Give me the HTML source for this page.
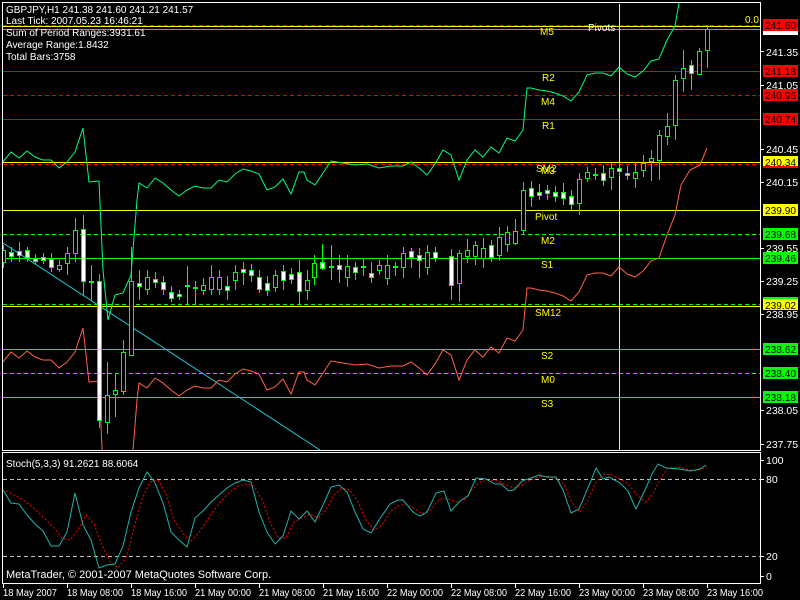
<!DOCTYPE html>
<html><head><meta charset="utf-8"><style>
html,body{margin:0;padding:0;background:#000;width:800px;height:600px;overflow:hidden}
svg{display:block;font-family:"Liberation Sans",sans-serif}
.t{fill:#fff;font-size:10px}
.y{fill:#ff0;font-size:10px}
.ax{fill:#fff;font-size:10.5px}
.tg{font-size:10.5px;fill:#000}
</style></head><body>
<svg width="800" height="600" viewBox="0 0 800 600">
<rect width="800" height="600" fill="#000"/>
<defs><clipPath id="m"><rect x="3" y="3" width="757" height="447"/></clipPath></defs>
<rect x="2.5" y="2.5" width="758" height="448" fill="none" stroke="#fff"/>
<rect x="2.5" y="452.5" width="758" height="131" fill="none" stroke="#fff"/>
<g clip-path="url(#m)">
<line x1="3" y1="25.5" x2="760" y2="25.5" stroke="#f00" stroke-dasharray="4,3"/>
<line x1="3" y1="26.5" x2="760" y2="26.5" stroke="#ff0"/>
<line x1="3" y1="29.5" x2="760" y2="29.5" stroke="#8c9099"/>
<line x1="3" y1="71.5" x2="760" y2="71.5" stroke="#e00"/>
<line x1="3" y1="95.5" x2="760" y2="95.5" stroke="#e00" stroke-dasharray="4,3"/>
<line x1="3" y1="119.5" x2="760" y2="119.5" stroke="#e00"/>
<line x1="3" y1="162.5" x2="760" y2="162.5" stroke="#ff0"/>
<line x1="3" y1="164.5" x2="760" y2="164.5" stroke="#f00" stroke-dasharray="4,3"/>
<line x1="3" y1="210.5" x2="760" y2="210.5" stroke="#ff0"/>
<line x1="3" y1="234.5" x2="760" y2="234.5" stroke="#0f0" stroke-dasharray="4,3"/>
<line x1="3" y1="258.5" x2="760" y2="258.5" stroke="#0f0"/>
<line x1="3" y1="304.5" x2="760" y2="304.5" stroke="#0f0" stroke-dasharray="4,3"/>
<line x1="3" y1="306.5" x2="760" y2="306.5" stroke="#ff0"/>
<line x1="3" y1="349.5" x2="760" y2="349.5" stroke="#0f0"/>
<line x1="3" y1="373.5" x2="760" y2="373.5" stroke="#0f0" stroke-dasharray="4,3"/>
<line x1="3" y1="397.5" x2="760" y2="397.5" stroke="#0f0"/>
<line x1="619.5" y1="4" x2="619.5" y2="450" stroke="#ff0"/>
<line x1="3" y1="243" x2="320" y2="450" stroke="#20c0d0"/>
<polyline fill="none" stroke="#00ff7f" points="2,163 11,152 19,158 27,151 35,157 43,160 51,160 59,168 67,162 75,152 83,128 89,182 99,181 103,270 108,320 115,295 123,293 131,275 137,200 139,183 147,188 155,178 163,183 171,190 179,196 187,190 195,186 203,188 211,188 219,180 227,182 235,174 243,169 251,171 259,174 267,190 275,187 283,179 291,194 299,172 304,172 307,180 315,185 331,161 343,163 355,165 367,164 379,168 391,166 403,166 411,162 419,168 427,175 435,164 443,150 451,155 459,180 467,160 475,150 483,157 491,147 499,153 507,138 515,141 523,130 527,88 531,88 539,90 547,91 555,93 563,96 571,101 579,92 587,75 595,73 603,73 611,76 619,67 627,74 635,77 643,71 651,61 659,59 667,40 675,26 679,3"/>
<polyline fill="none" stroke="#ff6347" points="2,363 11,352 19,358 27,351 35,357 43,360 51,360 59,368 67,362 75,352 83,328 89,382 99,381 103,470 123,493 131,475 137,400 139,383 147,388 155,378 163,383 171,390 179,396 187,390 195,386 203,388 211,388 219,380 227,382 235,374 243,369 251,371 259,374 267,390 275,387 283,379 291,394 299,372 304,372 307,380 315,385 331,361 343,363 355,365 367,364 379,368 391,366 403,366 411,362 419,368 427,375 435,364 443,350 451,355 459,380 467,360 475,350 483,357 491,347 499,353 507,338 515,341 523,330 527,288 531,288 539,290 547,291 555,293 563,296 571,301 579,292 587,275 595,273 603,273 611,276 619,267 627,274 635,277 643,271 651,261 659,258 667,235 675,215 681,185 690,170 700,165 707,148"/>
<g stroke="#0f0" stroke-width="1">
<path d="M3.5 245V268M11.5 247V262M19.5 242V262M27.5 247V262M35.5 254V264M43.5 253V264M51.5 253V272M59.5 260V272M67.5 247V275M75.5 218V262M83.5 215V295M91.5 265V300M99.5 274V428M107.5 362V434M115.5 373V417M123.5 340V395M131.5 247V355M139.5 270V300M147.5 270V295M155.5 272V288M163.5 276V295M171.5 286V302M179.5 290V300M187.5 266V305M195.5 281V305M203.5 278V295M211.5 265V295M219.5 270V295M227.5 276V300M235.5 265V290M243.5 262V285M251.5 264V282M259.5 270V293M267.5 276V296M275.5 270V292M283.5 265V290M291.5 268V284M299.5 260V305M307.5 270V300M314.5 255V285M322.5 244V270M331.5 245V280M339.5 255V283M347.5 255V287M355.5 262V280M363.5 258V276M371.5 262V283M379.5 260V275M387.5 255V285M395.5 262V276M403.5 247V278M411.5 248V268M419.5 248V278M427.5 245V275M435.5 247V262M451.5 249V300M459.5 250V302M467.5 239V263M475.5 241V265M483.5 238V268M491.5 240V262M499.5 227V261M507.5 226V252M515.5 219V245M523.5 182V234M531.5 181V207M539.5 184V200M547.5 185V200M555.5 186V202M563.5 183V205M571.5 190V210M579.5 173V215M587.5 167V182M595.5 168V180M603.5 165V186M611.5 163V190M619.5 163V176M627.5 166V180M635.5 162V188M643.5 155V177M651.5 150V181M659.5 130V180M667.5 113V145M675.5 75V140M683.5 50V92M691.5 60V90M699.5 48V74M707.5 25V68"/>
</g>
<g stroke="#0f0" stroke-width="1">
<rect x="1.5" y="250.5" width="4" height="12" fill="#000"/>
<rect x="9.5" y="252.5" width="4" height="4" fill="#fff"/>
<rect x="17.5" y="251.5" width="4" height="4" fill="#fff"/>
<rect x="25.5" y="250.5" width="4" height="7" fill="#fff"/>
<rect x="33.5" y="258.5" width="4" height="3" fill="#fff"/>
<rect x="41.5" y="257.5" width="4" height="3" fill="#fff"/>
<rect x="49.5" y="259.5" width="4" height="8" fill="#fff"/>
<rect x="57.5" y="265.5" width="4" height="4" fill="#000"/>
<rect x="65.5" y="253.5" width="4" height="10" fill="#000"/>
<rect x="73.5" y="230.5" width="4" height="23" fill="#000"/>
<rect x="81.5" y="229.5" width="4" height="52" fill="#fff"/>
<rect x="89.5" y="281.5" width="4" height="1" fill="#0f0"/>
<rect x="97.5" y="281.5" width="4" height="139" fill="#fff"/>
<rect x="105.5" y="395.5" width="4" height="27" fill="#000"/>
<rect x="113.5" y="390.5" width="4" height="4" fill="#000"/>
<rect x="121.5" y="352.5" width="4" height="39" fill="#000"/>
<rect x="129.5" y="281.5" width="4" height="74" fill="#000"/>
<rect x="137.5" y="283.5" width="4" height="3" fill="#fff"/>
<rect x="145.5" y="277.5" width="4" height="12" fill="#000"/>
<rect x="153.5" y="279.5" width="4" height="3" fill="#fff"/>
<rect x="161.5" y="282.5" width="4" height="7" fill="#fff"/>
<rect x="169.5" y="292.5" width="4" height="6" fill="#fff"/>
<rect x="177.5" y="294.5" width="4" height="2" fill="#fff"/>
<rect x="185.5" y="285.5" width="4" height="1" fill="#0f0"/>
<rect x="193.5" y="287.5" width="4" height="1" fill="#0f0"/>
<rect x="201.5" y="285.5" width="4" height="5" fill="#000"/>
<rect x="209.5" y="277.5" width="4" height="12" fill="#000"/>
<rect x="217.5" y="277.5" width="4" height="12" fill="#000"/>
<rect x="225.5" y="286.5" width="4" height="4" fill="#fff"/>
<rect x="233.5" y="272.5" width="4" height="8" fill="#000"/>
<rect x="241.5" y="269.5" width="4" height="3" fill="#fff"/>
<rect x="249.5" y="270.5" width="4" height="5" fill="#fff"/>
<rect x="257.5" y="277.5" width="4" height="12" fill="#fff"/>
<rect x="265.5" y="283.5" width="4" height="7" fill="#fff"/>
<rect x="273.5" y="275.5" width="4" height="12" fill="#000"/>
<rect x="281.5" y="271.5" width="4" height="9" fill="#fff"/>
<rect x="289.5" y="274.5" width="4" height="5" fill="#fff"/>
<rect x="297.5" y="272.5" width="4" height="19" fill="#fff"/>
<rect x="305.5" y="280.5" width="4" height="10" fill="#000"/>
<rect x="312.5" y="263.5" width="4" height="14" fill="#000"/>
<rect x="320.5" y="262.5" width="4" height="6" fill="#fff"/>
<rect x="329.5" y="266.5" width="4" height="1" fill="#0f0"/>
<rect x="337.5" y="265.5" width="4" height="4" fill="#fff"/>
<rect x="345.5" y="266.5" width="4" height="11" fill="#000"/>
<rect x="353.5" y="267.5" width="4" height="5" fill="#fff"/>
<rect x="361.5" y="266.5" width="4" height="1" fill="#0f0"/>
<rect x="369.5" y="273.5" width="4" height="4" fill="#fff"/>
<rect x="377.5" y="265.5" width="4" height="5" fill="#000"/>
<rect x="385.5" y="265.5" width="4" height="13" fill="#000"/>
<rect x="393.5" y="266.5" width="4" height="1" fill="#0f0"/>
<rect x="401.5" y="253.5" width="4" height="14" fill="#000"/>
<rect x="409.5" y="251.5" width="4" height="6" fill="#fff"/>
<rect x="417.5" y="255.5" width="4" height="5" fill="#fff"/>
<rect x="425.5" y="252.5" width="4" height="15" fill="#000"/>
<rect x="433.5" y="252.5" width="4" height="6" fill="#fff"/>
<rect x="449.5" y="256.5" width="4" height="29" fill="#fff"/>
<rect x="457.5" y="253.5" width="4" height="30" fill="#000"/>
<rect x="465.5" y="250.5" width="4" height="6" fill="#000"/>
<rect x="473.5" y="245.5" width="4" height="11" fill="#000"/>
<rect x="481.5" y="248.5" width="4" height="10" fill="#000"/>
<rect x="489.5" y="245.5" width="4" height="12" fill="#fff"/>
<rect x="497.5" y="237.5" width="4" height="18" fill="#000"/>
<rect x="505.5" y="232.5" width="4" height="12" fill="#000"/>
<rect x="513.5" y="231.5" width="4" height="12" fill="#000"/>
<rect x="521.5" y="190.5" width="4" height="40" fill="#000"/>
<rect x="529.5" y="188.5" width="4" height="8" fill="#fff"/>
<rect x="537.5" y="192.5" width="4" height="3" fill="#fff"/>
<rect x="545.5" y="190.5" width="4" height="3" fill="#fff"/>
<rect x="553.5" y="192.5" width="4" height="4" fill="#fff"/>
<rect x="561.5" y="192.5" width="4" height="6" fill="#fff"/>
<rect x="569.5" y="196.5" width="4" height="8" fill="#fff"/>
<rect x="577.5" y="179.5" width="4" height="24" fill="#000"/>
<rect x="585.5" y="172.5" width="4" height="6" fill="#000"/>
<rect x="593.5" y="174.5" width="4" height="1" fill="#0f0"/>
<rect x="601.5" y="173.5" width="4" height="7" fill="#fff"/>
<rect x="609.5" y="168.5" width="4" height="9" fill="#000"/>
<rect x="617.5" y="168.5" width="4" height="3" fill="#fff"/>
<rect x="625.5" y="173.5" width="4" height="2" fill="#fff"/>
<rect x="633.5" y="172.5" width="4" height="6" fill="#000"/>
<rect x="641.5" y="163.5" width="4" height="7" fill="#000"/>
<rect x="649.5" y="158.5" width="4" height="3" fill="#000"/>
<rect x="657.5" y="135.5" width="4" height="25" fill="#000"/>
<rect x="665.5" y="126.5" width="4" height="10" fill="#000"/>
<rect x="673.5" y="80.5" width="4" height="45" fill="#000"/>
<rect x="681.5" y="68.5" width="4" height="10" fill="#000"/>
<rect x="689.5" y="65.5" width="4" height="8" fill="#fff"/>
<rect x="697.5" y="51.5" width="4" height="23" fill="#000"/>
<rect x="705.5" y="29.5" width="4" height="21" fill="#000"/>
</g>
<text class="y" x="540" y="35">M5</text>
<text class="t" x="588" y="31">Pivots</text>
<text class="y" x="542" y="81">R2</text>
<text class="y" x="541" y="105">M4</text>
<text class="y" x="542" y="129">R1</text>
<text class="y" x="536" y="172">SM2</text><text class="y" x="541" y="174">M3</text>
<text class="y" x="535" y="220">Pivot</text>
<text class="y" x="541" y="244">M2</text>
<text class="y" x="541" y="268">S1</text>
<text class="y" x="535" y="316">SM12</text>
<text class="y" x="541" y="359">S2</text>
<text class="y" x="541" y="383">M0</text>
<text class="y" x="541" y="407">S3</text>
<text class="y" x="745" y="23">0.0</text>
</g>
<text class="t" x="6" y="13">GBPJPY,H1  241.38 241.60 241.21 241.57</text>
<text class="t" x="6" y="24">Last Tick: 2007.05.23 16:46:21</text>
<text class="t" x="6" y="36">Sum of Period Ranges:3931.61</text>
<text class="t" x="6" y="48">Average Range:1.8432</text>
<text class="t" x="6" y="60">Total Bars:3758</text>
<g stroke="#fff"><path d="M760 51.5h4M760 85.5h4M760 149.5h4M760 182.5h4M760 248.5h4M760 281.5h4M760 314.5h4M760 410.5h4M760 444.5h4M760 460.5h4M760 479.5h4M760 556.5h4M760 576.5h4"/></g>
<g class="ax">
<text x="766" y="56">241.35</text><text x="766" y="89">241.05</text><text x="766" y="153">240.45</text><text x="766" y="186">240.15</text><text x="766" y="252">239.55</text><text x="766" y="285">239.25</text><text x="766" y="318">238.95</text><text x="766" y="414">238.05</text><text x="766" y="448">237.75</text>
<text x="766" y="464">100</text><text x="766" y="483">80</text><text x="766" y="560">20</text><text x="766" y="580">0</text>
</g>
<rect x="763" y="27" width="35" height="8" fill="#fff"/>
<g>
<rect x="763" y="19" width="35" height="12" fill="#f00"/><text class="tg" x="765" y="29" textLength="31" lengthAdjust="spacingAndGlyphs">241.60</text>
<rect x="763" y="65" width="35" height="12" fill="#f00"/><text class="tg" x="765" y="75" textLength="31" lengthAdjust="spacingAndGlyphs">241.18</text>
<rect x="763" y="89" width="35" height="12" fill="#f00"/><text class="tg" x="765" y="99" textLength="31" lengthAdjust="spacingAndGlyphs">240.96</text>
<rect x="763" y="113" width="35" height="12" fill="#f00"/><text class="tg" x="765" y="123" textLength="31" lengthAdjust="spacingAndGlyphs">240.74</text>
<rect x="763" y="156" width="35" height="12" fill="#f00"/><rect x="763" y="156" width="35" height="10" fill="#ff0"/><text class="tg" x="765" y="166" textLength="31" lengthAdjust="spacingAndGlyphs">240.34</text>
<rect x="763" y="204" width="35" height="12" fill="#ff0"/><text class="tg" x="765" y="214" textLength="31" lengthAdjust="spacingAndGlyphs">239.90</text>
<rect x="763" y="228" width="35" height="12" fill="#0f0"/><text class="tg" x="765" y="238" textLength="31" lengthAdjust="spacingAndGlyphs">239.68</text>
<rect x="763" y="252" width="35" height="12" fill="#0f0"/><text class="tg" x="765" y="262" textLength="31" lengthAdjust="spacingAndGlyphs">239.46</text>
<rect x="763" y="297" width="35" height="13" fill="#0f0"/><rect x="763" y="299" width="35" height="11" fill="#ff0"/><text class="tg" x="765" y="309" textLength="31" lengthAdjust="spacingAndGlyphs">239.02</text>
<rect x="763" y="343" width="35" height="12" fill="#0f0"/><text class="tg" x="765" y="353" textLength="31" lengthAdjust="spacingAndGlyphs">238.62</text>
<rect x="763" y="367" width="35" height="12" fill="#0f0"/><text class="tg" x="765" y="377" textLength="31" lengthAdjust="spacingAndGlyphs">238.40</text>
<rect x="763" y="391" width="35" height="12" fill="#0f0"/><text class="tg" x="765" y="401" textLength="31" lengthAdjust="spacingAndGlyphs">238.18</text>
</g>
<line x1="3" y1="479.5" x2="760" y2="479.5" stroke="#c0c0c0" stroke-dasharray="4,3"/>
<line x1="3" y1="556.5" x2="760" y2="556.5" stroke="#c0c0c0" stroke-dasharray="4,3"/>
<text class="t" x="6" y="467">Stoch(5,3,3) 91.2621 88.6064</text>
<polyline fill="none" stroke="#f00" stroke-dasharray="2,2" points="6,491 14,495 22,499 30,505 38,512 46,520 54,528 62,538 70,540 78,530 86,515 94,524 102,545 110,562 118,568 126,558 134,528 142,499 150,482 158,480 166,494 174,520 182,532 190,542 198,534 206,522 214,510 222,500 230,492 238,486 246,484 254,486 262,500 270,522 278,538 286,538 294,522 302,518 310,514 318,518 326,510 334,495 342,488 350,490 358,502 366,520 374,530 382,525 390,512 398,506 406,504 414,508 422,514 430,510 440,499 448,499 456,502 464,500 472,490 480,482 490,480 498,481 506,485 514,488 522,485 530,480 538,477 548,476 556,479 564,484 572,503 580,512 588,500 596,482 604,474 612,475 620,479 628,484 638,496 646,502 654,492 662,476 668,468 680,467 690,470 700,470 707,467"/>
<polyline fill="none" stroke="#20b2aa" points="3,490 11,503 19,504 27,515 35,524 43,531 51,546 59,546 67,532 75,493 83,525 91,540 99,568 107,565 115,564 123,546 131,512 139,488 147,472 155,483 163,503 171,532 179,540 187,547 195,518 203,511 211,502 219,495 227,488 235,483 243,480 251,482 259,512 267,532 275,544 283,536 291,511 299,519 307,511 315,522 323,505 331,487 339,485 347,492 355,512 363,529 371,533 379,520 390,504 398,500 403,500 413,512 420,516 427,512 436,493 444,491 451,511 460,501 468,496 476,478 486,479 495,484 501,484 509,491 514,490 522,481 531,478 539,475 547,477 556,477 563,490 571,513 579,509 590,483 596,468 603,479 609,477 620,483 628,491 636,509 645,490 652,474 658,464 666,468 680,469 690,471 700,469 706,465"/>
<text class="t" x="6" y="578" style="font-size:11px">MetaTrader, © 2001-2007 MetaQuotes Software Corp.</text>
<g stroke="#fff"><path d="M3.5 584v4M67.5 584v4M131.5 584v4M195.5 584v4M259.5 584v4M323.5 584v4M387.5 584v4M451.5 584v4M515.5 584v4M579.5 584v4M643.5 584v4M707.5 584v4"/></g>
<g class="ax">
<text x="3" y="596" textLength="54" lengthAdjust="spacingAndGlyphs">18 May 2007</text><text x="67" y="596" textLength="56" lengthAdjust="spacingAndGlyphs">18 May 08:00</text><text x="131" y="596" textLength="56" lengthAdjust="spacingAndGlyphs">18 May 16:00</text><text x="195" y="596" textLength="56" lengthAdjust="spacingAndGlyphs">21 May 00:00</text><text x="259" y="596" textLength="56" lengthAdjust="spacingAndGlyphs">21 May 08:00</text><text x="323" y="596" textLength="56" lengthAdjust="spacingAndGlyphs">21 May 16:00</text><text x="387" y="596" textLength="56" lengthAdjust="spacingAndGlyphs">22 May 00:00</text><text x="451" y="596" textLength="56" lengthAdjust="spacingAndGlyphs">22 May 08:00</text><text x="515" y="596" textLength="56" lengthAdjust="spacingAndGlyphs">22 May 16:00</text><text x="579" y="596" textLength="56" lengthAdjust="spacingAndGlyphs">23 May 00:00</text><text x="643" y="596" textLength="56" lengthAdjust="spacingAndGlyphs">23 May 08:00</text><text x="707" y="596" textLength="56" lengthAdjust="spacingAndGlyphs">23 May 16:00</text>
</g>
</svg>
</body></html>
